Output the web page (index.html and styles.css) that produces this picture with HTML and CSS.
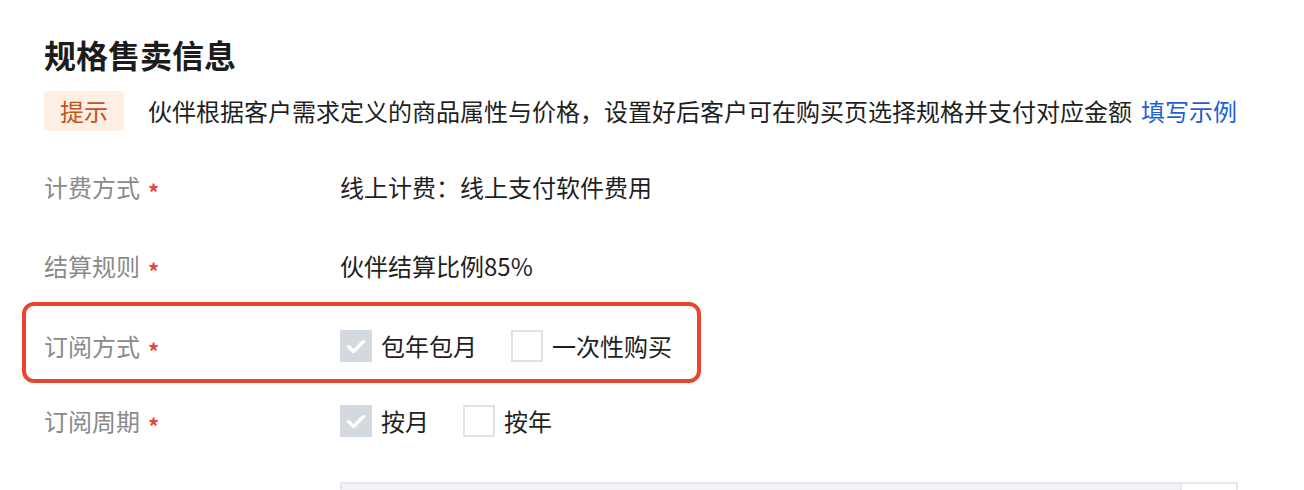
FILE: index.html
```html
<!DOCTYPE html>
<html lang="zh-CN">
<head>
<meta charset="utf-8">
<title>规格售卖信息</title>
<link rel="stylesheet" href="styles.css">
</head>
<body>
<div class="page">
  <h2 class="title">规格售卖信息</h2>
  <div class="tip-row">
    <span class="tip-tag">提示</span>
    <span class="tip-text">伙伴根据客户需求定义的商品属性与价格，设置好后客户可在购买页选择规格并支付对应金额</span>
    <a class="tip-link">填写示例</a>
  </div>

  <div class="form-item item-1">
    <div class="label">计费方式<span class="req">*</span></div>
    <div class="value">线上计费：线上支付软件费用</div>
  </div>

  <div class="form-item item-2">
    <div class="label">结算规则<span class="req">*</span></div>
    <div class="value">伙伴结算比例85%</div>
  </div>

  <div class="form-item item-3 highlighted">
    <div class="label">订阅方式<span class="req">*</span></div>
    <div class="value checks">
      <label class="check">
        <span class="box checked"><svg viewBox="0 0 32 32" width="32" height="32"><polyline points="8.5,16.5 13.5,21.5 23.5,11.5" fill="none" stroke="#fff" stroke-width="3.5" stroke-linecap="round" stroke-linejoin="round"/></svg></span>
        <span class="check-text">包年包月</span>
      </label>
      <label class="check">
        <span class="box"></span>
        <span class="check-text">一次性购买</span>
      </label>
    </div>
  </div>

  <div class="form-item item-4">
    <div class="label">订阅周期<span class="req">*</span></div>
    <div class="value checks">
      <label class="check">
        <span class="box checked"><svg viewBox="0 0 32 32" width="32" height="32"><polyline points="8.5,16.5 13.5,21.5 23.5,11.5" fill="none" stroke="#fff" stroke-width="3.5" stroke-linecap="round" stroke-linejoin="round"/></svg></span>
        <span class="check-text">按月</span>
      </label>
      <label class="check">
        <span class="box"></span>
        <span class="check-text">按年</span>
      </label>
    </div>
  </div>

  <div class="spec-table">
    <div class="th th-main"></div>
    <div class="th th-side"></div>
  </div>
</div>
</body>
</html>
```

FILE: styles.css
```css
html, body {
  margin: 0;
  padding: 0;
  background: #ffffff;
  overflow: hidden;
}

body {
  width: 1304px;
  height: 490px;
  font-family: "Noto Sans CJK SC", "Noto Sans", sans-serif;
  color: #1f1f1f;
}

.page {
  padding: 34px 0 0 44px;
}

.title {
  margin: 0;
  font-size: 32px;
  line-height: 40px;
  font-weight: 700;
  color: #1c1c1c;
}

.tip-row {
  margin-top: 17px;
  display: flex;
  align-items: center;
  height: 40px;
  font-size: 24px;
  line-height: 40px;
}

.tip-tag {
  width: 80px;
  height: 40px;
  border-radius: 4px;
  background: #fdefe3;
  color: #c4521d;
  text-align: center;
  flex: none;
}

.tip-text {
  margin-left: 24px;
  color: #1f1f1f;
  white-space: nowrap;
}

.tip-link {
  margin-left: 9px;
  color: #1f5fd6;
  white-space: nowrap;
  cursor: pointer;
}

.form-item {
  display: flex;
  align-items: center;
  height: 48px;
  font-size: 24px;
}

.item-1 { margin-top: 32px; }
.item-2 { margin-top: 31px; }
.item-3 { margin-top: 32px; }
.item-4 { margin-top: 27px; }

.label {
  width: 296px;
  flex: none;
  display: flex;
  align-items: center;
  color: #8a8a8a;
  line-height: 32px;
}

.req {
  margin-left: 8px;
  color: #e5473a;
  font-size: 22px;
  font-weight: 700;
  line-height: 22px;
  padding-top: 7px;
}

.value {
  color: #1f1f1f;
  line-height: 32px;
  white-space: nowrap;
}

.checks {
  display: flex;
  align-items: center;
}

.check {
  display: flex;
  align-items: center;
  margin-right: 34px;
}

.box {
  width: 32px;
  height: 32px;
  box-sizing: border-box;
  border: 2px solid #dfe2e8;
  background: #ffffff;
  flex: none;
  display: block;
}

.box.checked {
  border: none;
  background: #d4d8df;
}

.box svg {
  display: block;
}

.check-text {
  margin-left: 9px;
}

.highlighted {
  position: relative;
}

.highlighted::before {
  content: "";
  position: absolute;
  left: -22px;
  top: -20px;
  width: 679px;
  height: 81px;
  box-sizing: border-box;
  border: 4px solid #e8452c;
  border-radius: 12px;
  pointer-events: none;
}

.spec-table {
  margin-top: 37px;
  margin-left: 296px;
  width: 898px;
  box-sizing: border-box;
  border: 2px solid #e6e7ec;
  border-bottom: none;
  display: grid;
  grid-template-columns: 1fr 56px;
  height: 20px;
}

.th-main {
  background: #f2f3f8;
}

.th-side {
  background: #ffffff;
  border-left: 2px solid #e6e7ec;
}
```
